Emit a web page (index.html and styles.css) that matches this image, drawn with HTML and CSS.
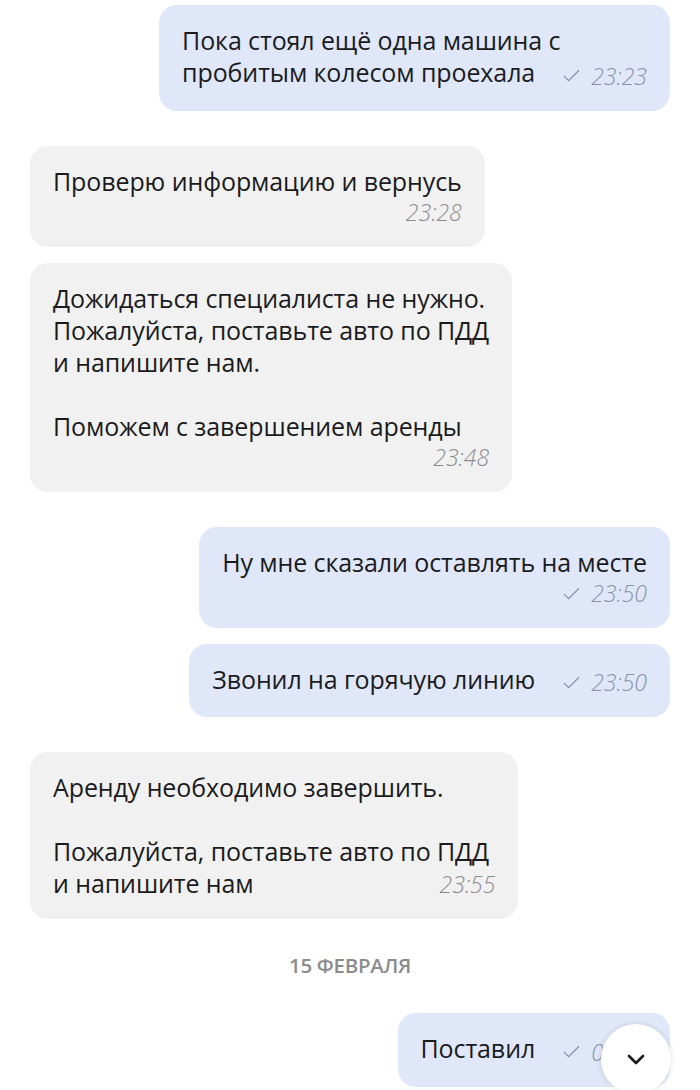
FILE: index.html
```html
<!DOCTYPE html>
<html lang="ru">
<head>
<meta charset="utf-8">
<link rel="stylesheet" href="styles.css">
</head>
<body>
<div class="chat">
  <div class="group">
    <div class="bubble out">Пока стоял ещё одна машина с<br>пробитым колесом проехала<span class="meta"><svg class="check" viewBox="0 0 18 13"><path d="M1 7 L6 12 L17 1"/></svg><span class="time">23:23</span></span></div>
  </div>
  <div class="group">
    <div class="bubble in">Проверю информацию и вернусь<span class="meta block"><span class="time">23:28</span></span></div>
    <div class="bubble in">Дожидаться специалиста не нужно.<br>Пожалуйста, поставьте авто по ПДД<br>и напишите нам.<br><br>Поможем с завершением аренды<span class="meta block"><span class="time">23:48</span></span></div>
  </div>
  <div class="group">
    <div class="bubble out">Ну мне сказали оставлять на месте<span class="meta block"><svg class="check" viewBox="0 0 18 13"><path d="M1 7 L6 12 L17 1"/></svg><span class="time">23:50</span></span></div>
    <div class="bubble out">Звонил на горячую линию<span class="meta"><svg class="check" viewBox="0 0 18 13"><path d="M1 7 L6 12 L17 1"/></svg><span class="time">23:50</span></span></div>
  </div>
  <div class="group">
    <div class="bubble in">Аренду необходимо завершить.<br><br>Пожалуйста, поставьте авто по ПДД<br>и напишите нам<span class="meta wide"><span class="time">23:55</span></span></div>
  </div>
  <div class="date">15 ФЕВРАЛЯ</div>
  <div class="group">
    <div class="bubble out">Поставил<span class="meta"><svg class="check" viewBox="0 0 18 13"><path d="M1 7 L6 12 L17 1"/></svg><span class="time">00:01</span></span></div>
  </div>
</div>
<button class="scroll-down" aria-label="Вниз"><svg viewBox="0 0 24 24"><path d="M5 9 L12 16 L19 9"/></svg></button>
</body>
</html>
```
FILE: styles.css
```css
html, body {
  margin: 0;
  padding: 0;
  background: #ffffff;
}
body {
  width: 700px;
  height: 1090px;
  overflow: hidden;
  position: relative;
  font-family: "Open Sans", "Liberation Sans", sans-serif;
  color: #1b1b1d;
}
.chat {
  display: flex;
  flex-direction: column;
  gap: 35px;
  padding: 5px 30px 0 30px;
}
.group {
  display: flex;
  flex-direction: column;
  gap: 16px;
}
.bubble {
  font-size: 25px;
  line-height: 32px;
  padding: 19px 23px 19px 23px;
  border-radius: 18px;
  max-width: 500px;
  letter-spacing: -0.1px;
}
.bubble.in {
  background: #f1f1f1;
  align-self: flex-start;
}
.bubble.out {
  background: #dfe7f9;
  align-self: flex-end;
}
.meta {
  display: inline-flex;
  align-items: center;
  gap: 11px;
  margin-left: 28px;
  font-size: 23px;
  font-style: italic;
  font-weight: 300;
  color: #8b8b8f;
  letter-spacing: 0;
  vertical-align: baseline;
}
.out .meta {
  color: #8a93a6;
}
.meta.block {
  display: flex;
  justify-content: flex-end;
  margin-left: 0;
  line-height: 31px;
}
.meta.wide {
  margin-left: 186px;
}
.check {
  width: 17px;
  height: 13px;
  fill: none;
  stroke: #8a93a6;
  stroke-width: 1.3;
}
.date {
  align-self: center;
  font-size: 20.5px;
  font-weight: 600;
  letter-spacing: -0.3px;
  color: #8c8c8c;
  margin: -3px 0 -1px;
}
.scroll-down {
  position: absolute;
  left: 601px;
  top: 1024px;
  width: 70px;
  height: 70px;
  border-radius: 50%;
  border: none;
  background: #ffffff;
  box-shadow: 0 0 6px rgba(0, 0, 0, 0.12);
  display: flex;
  align-items: center;
  justify-content: center;
  padding: 0;
}
.scroll-down svg {
  width: 24px;
  height: 24px;
  fill: none;
  stroke: #1b1b1d;
  stroke-width: 2.6;
  stroke-linecap: round;
  stroke-linejoin: round;
}
```
